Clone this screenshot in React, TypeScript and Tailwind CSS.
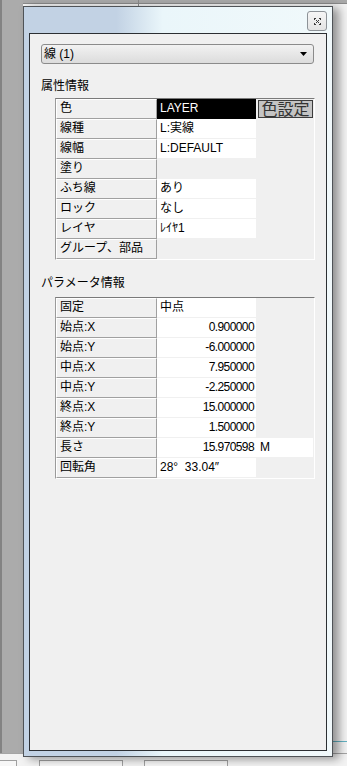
import React from "react";

type Cell = {
  label: string;
  value?: string;
  blank?: boolean;
  right?: boolean;
  extra?: string;
};

const attrRows: Cell[] = [
  { label: "色", value: "LAYER" },
  { label: "線種", value: "L:実線" },
  { label: "線幅", value: "L:DEFAULT" },
  { label: "塗り", blank: true },
  { label: "ふち線", value: "あり" },
  { label: "ロック", value: "なし" },
  { label: "レイヤ", value: "ﾚｲﾔ1" },
  { label: "グループ、部品", blank: true },
];

const paramRows: Cell[] = [
  { label: "固定", value: "中点" },
  { label: "始点:X", value: "0.900000", right: true },
  { label: "始点:Y", value: "-6.000000", right: true },
  { label: "中点:X", value: "7.950000", right: true },
  { label: "中点:Y", value: "-2.250000", right: true },
  { label: "終点:X", value: "15.000000", right: true },
  { label: "終点:Y", value: "1.500000", right: true },
  { label: "長さ", value: "15.970598", right: true, extra: "M" },
  { label: "回転角", value: "28°  33.04″" },
];

function CloseGlyph() {
  return (
    <svg width="9" height="9" viewBox="0 0 9 9" shapeRendering="crispEdges">
      <path
        d="M1 1h2v1H1zM6 1h2v1H6zM1 7h2v1H1zM6 7h2v1H6zM1 1h1v2H1zM7 1h1v2H7zM1 6h1v2H1zM7 6h1v2H7zM3 3h1v1H3zM5 3h1v1H5zM4 4h1v1H4zM3 5h1v1H3zM5 5h1v1H5z"
        fill="#3a3a3a"
      />
    </svg>
  );
}

function Grid({ rows, first }: { rows: Cell[]; first?: boolean }) {
  return (
    <div className="ml-[25px] w-[260px] border-t border-l border-t-[#7a7a7a] border-l-[#9a9a9a] border-r border-b border-r-white border-b-white bg-[#f0f0f0]">
      {rows.map((r, i) => (
        <div key={r.label} className="flex h-5">
          <div className="w-[101px] shrink-0 border-t border-l border-t-white border-l-white border-b border-r border-b-[#a0a0a0] border-r-[#a0a0a0] bg-[#f0f0f0] pl-[3px] text-[12px] leading-[17px] text-black">
            {r.label}
          </div>
          {r.blank ? (
            <div className="w-[99px] shrink-0" />
          ) : (
            <div
              className={
                first && i === 0
                  ? "w-[99px] shrink-0 bg-black pl-[3px] text-[12px] leading-[19px] text-white"
                  : r.right
                    ? "w-[99px] shrink-0 border-b border-[#f0f0f0] bg-white pr-[2px] text-right text-[12px] leading-[19px] tracking-[-0.6px] text-black"
                    : "w-[99px] shrink-0 whitespace-pre border-b border-[#f0f0f0] bg-white pl-[3px] text-[12px] leading-[19px] text-black"
              }
            >
              {r.value}
            </div>
          )}
          <div className="flex flex-1 items-center">
            {first && i === 0 && (
              <button className="ml-[2px] h-[18px] w-[55px] border border-[#3c3c3c] bg-[#c4c4c4] text-[16px] leading-[15px] text-[#333]">
                色設定
              </button>
            )}
            {r.extra && (
              <div className="h-full w-[57px] border-b border-[#f0f0f0] bg-white pl-[4px] text-[12px] leading-[19px] text-black">
                {r.extra}
              </div>
            )}
          </div>
        </div>
      ))}
    </div>
  );
}

export default function App() {
  return (
    <div className="relative h-[766px] w-[347px] overflow-hidden bg-[#f3f3f3] font-['Liberation_Sans','Noto_Sans_CJK_JP',sans-serif]">
      {/* desktop behind the window */}
      <div className="absolute left-0 right-0 top-0 h-[4px] border-b border-[#8a8a8a] bg-[#a9a9a9]" />
      <div className="absolute left-[138px] top-0 h-[6px] w-px bg-[#8a8a8a]" />
      <div className="absolute bottom-[12px] left-0 top-0 w-[23px] border-l-2 border-[#838383] bg-[#ababab]" />
      <div className="absolute bottom-[12px] left-0 right-0 h-px bg-[#a5a5a5]" />
      <div className="absolute right-0 top-[741px] h-px w-[14px] bg-[#63b3c3]" />
      <div className="absolute bottom-0 left-0 h-[6px] w-[17px] border-t border-r border-[#a0a0a0] bg-[#f7f7f7]" />
      <div className="absolute bottom-0 left-[39px] h-[6px] w-[84px] border-t border-x border-[#a0a0a0] bg-[#f7f7f7]" />
      <div className="absolute bottom-0 left-[144px] h-[6px] w-[84px] border-t border-x border-[#a0a0a0] bg-[#f7f7f7]" />

      {/* tool window */}
      <div className="absolute left-[23px] top-[6px] flex h-[751px] w-[310px] flex-col border border-[#4f5357] bg-linear-to-r from-[#c2d2e4] from-[30%] via-[#eaf6fa] via-[45%] to-[#f1f9fb] px-[5px] pb-[5px] shadow-[6px_2px_9px_rgba(0,0,0,0.4)]">
        <div className="flex h-[26px] shrink-0 items-start justify-end">
          <div className="mt-[4px] flex h-[20px] w-[20px] items-center justify-center rounded-[3px] border border-[#8d9297] bg-linear-to-b from-[#f6f6f6] to-[#e4e4e4]">
            <CloseGlyph />
          </div>
        </div>
        <div className="flex flex-1 flex-col border border-[#2c2f33] bg-[#f0f0f0]">
          <div className="ml-[11px] mr-[12px] mt-[10px] flex h-[20px] items-center justify-between rounded-[3px] border border-[#8b8b8b] bg-linear-to-b from-[#f2f2f2] to-[#dcdcdc] pl-[2px] pr-[6px]">
            <span className="text-[12px] leading-none text-black">線 (1)</span>
            <svg width="7" height="4" viewBox="0 0 7 4">
              <path d="M0 0h7L3.5 4z" fill="#000" />
            </svg>
          </div>
          <div className="ml-[11px] mt-[14px] h-4 text-[12px] leading-4 text-black">属性情報</div>
          <div className="mt-[4px]">
            <Grid rows={attrRows} first />
          </div>
          <div className="ml-[11px] mt-[15px] h-4 text-[12px] leading-4 text-black">パラメータ情報</div>
          <div className="mt-[6px]">
            <Grid rows={paramRows} />
          </div>
        </div>
      </div>
    </div>
  );
}
